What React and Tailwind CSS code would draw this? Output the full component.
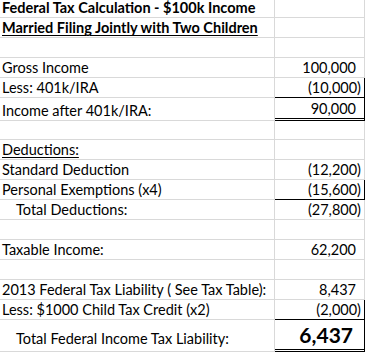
import React from 'react';

// each row: label, value, options
const rows = [
  { label: 'Federal Tax Calculation - $100k Income', bold: true, h: 'h-[18px]' },
  { label: 'Married Filing Jointly with Two Children', bold: true, underline: true },
  { label: '' },
  { label: 'Gross Income', value: '100,000' },
  { label: 'Less: 401k/IRA', value: '(10,000)', neg: true, line: 'black' },
  { label: 'Income after 401k/IRA:', value: '90,000', line: 'double', h: 'h-[23px]' },
  { label: '', h: 'h-[19px]' },
  { label: 'Deductions:', underline: true },
  { label: 'Standard Deduction', value: '(12,200)', neg: true },
  { label: 'Personal Exemptions (x4)', value: '(15,600)', neg: true, line: 'black' },
  { label: 'Total Deductions:', value: '(27,800)', neg: true, indent: true },
  { label: '' },
  { label: 'Taxable Income:', value: '62,200' },
  { label: '' },
  { label: '2013 Federal Tax Liability ( See Tax Table):', value: '8,437' },
  { label: 'Less: $1000 Child Tax Credit (x2)', value: '(2,000)', neg: true, line: 'black' },
  { label: 'Total Federal Income Tax Liability:', value: '6,437', indent: true, big: true, line: 'double', h: 'h-[32px]' },
];

function Row({ r }) {
  const h = r.h || 'h-[20px]';
  let valueBorder = 'border-b border-[#d9d9d9]';
  if (r.line === 'black') valueBorder = 'border-b border-black';
  if (r.line === 'double') valueBorder = 'border-b-[3px] border-double border-black';

  return (
    <div className={`flex ${h}`}>
      <div
        className={`w-[275px] shrink-0 border-r border-b border-[#d9d9d9] flex items-end whitespace-nowrap ${
          r.indent ? 'pl-[16px]' : 'pl-[2px]'
        } ${r.big ? 'pb-[4px]' : 'pb-[1px]'}`}
      >
        <span
          className={`text-[14.5px] leading-[17px] text-black ${r.bold ? 'font-bold' : ''} ${
            r.underline ? 'underline decoration-1 underline-offset-2' : ''
          }`}
        >
          {r.label}
        </span>
      </div>
      <div
        className={`w-[90px] shrink-0 border-r border-[#d9d9d9] ${valueBorder} flex items-end justify-end whitespace-nowrap ${
          r.big ? 'pr-[11px] pb-[2px]' : r.neg ? 'pr-[3px] pb-[1px]' : 'pr-[8px] pb-[1px]'
        }`}
      >
        {r.value && (
          <span
            className={
              r.big
                ? 'text-[21px] leading-[24px] font-bold text-black'
                : 'text-[14.5px] leading-[17px] text-black'
            }
          >
            {r.value}
          </span>
        )}
      </div>
    </div>
  );
}

export default function App() {
  return (
    <div className="w-[365px] h-[355px] bg-white overflow-hidden font-['Lato','Open_Sans',sans-serif]">
      {rows.map((r, i) => (
        <Row key={i} r={r} />
      ))}
    </div>
  );
}
